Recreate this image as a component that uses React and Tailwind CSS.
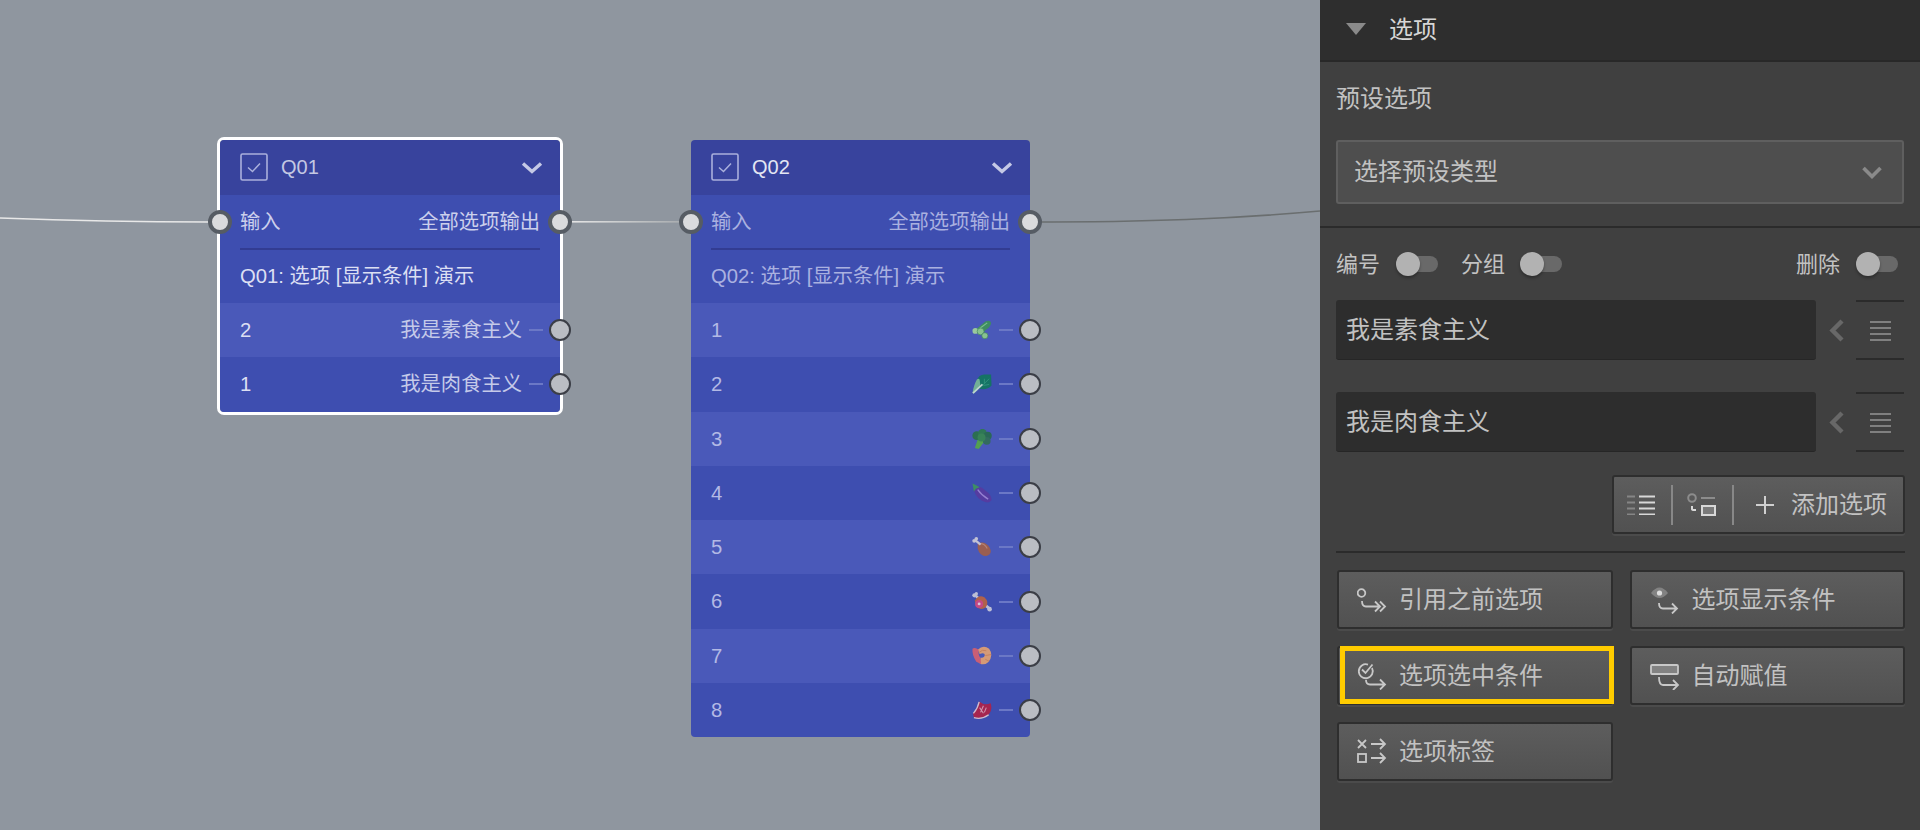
const Emoji = {
  cucumber: (
    <>
      <path d="M4 10 L14 1.5 Q19 -0.5 20 3 Q20 7 15 10 L10 15 Z" fill="#3c9653" />
      <path d="M8 9 L16 3" stroke="#86d088" strokeWidth="1.2" />
      <circle cx="3.5" cy="11.5" r="3" fill="#a9dd98" />
      <circle cx="9" cy="12" r="3.6" fill="#93d488" stroke="#3f8f4f" strokeWidth=".7" />
      <circle cx="13.5" cy="16.5" r="3.2" fill="#93d488" stroke="#3f8f4f" strokeWidth=".7" />
    </>
  ),
  bokchoy: (
    <>
      <path d="M5 7 Q7 0.5 13 0.5 L20 0.5 L20.5 12 Q15 18 6 15 Z" fill="#0e7a58" />
      <path d="M11 12 L18 5 M13 5 L13 10 M12 12 L18 11" stroke="#2fa075" strokeWidth=".9" fill="none" />
      <path d="M0.5 20 Q2 11 5 6 Q7 4 8 6 L9 13 Q6 17 2 20.5 Z" fill="#7cc093" />
      <path d="M1 20 L11 11" stroke="#d6ecd6" strokeWidth="1.8" />
    </>
  ),
  broccoli: (
    <>
      <path d="M3 20 L6 11 L13 13 L7 21 Z" fill="#56ad40" />
      <circle cx="5" cy="7" r="4.6" fill="#27733f" />
      <circle cx="11" cy="4.5" r="4.6" fill="#2b7d45" />
      <circle cx="16.5" cy="7" r="4.2" fill="#256b45" />
      <circle cx="15.5" cy="12.5" r="4" fill="#2f6f50" />
      <circle cx="10" cy="9" r="4.2" fill="#358a48" />
    </>
  ),
  eggplant: (
    <>
      <path d="M2 5 Q9 2 14 8 Q21 13 20.5 18 Q17 22.5 10 18.5 Q2 13 2 5 Z" fill="#5a3a9f" />
      <path d="M6 7 Q10 13 17 17" stroke="#a48ad8" strokeWidth="1.4" fill="none" />
      <path d="M0.5 0.5 L4 2 L8 4.5 L4 6 L2 9 Z" fill="#3e9a58" />
    </>
  ),
  drumstick: (
    <>
      <path d="M6 7 Q13 3 18.5 11 Q22 18.5 15 20 Q8 20 6 12 Z" fill="#a95f3f" />
      <path d="M9 7 Q13 7 16 12" stroke="#c98a66" strokeWidth="1.2" fill="none" />
      <path d="M9 8 L3 3" stroke="#d8d5da" strokeWidth="2.4" />
      <circle cx="2.3" cy="4" r="2" fill="#d8d5da" />
      <circle cx="4.5" cy="1.9" r="1.9" fill="#d8d5da" />
    </>
  ),
  meat: (
    <>
      <path d="M13 13 L19 18 M4 4 L7 7" stroke="#d2d2dc" strokeWidth="2.8" />
      <circle cx="2.5" cy="3.5" r="2.2" fill="#d2d2dc" />
      <circle cx="4.5" cy="1.8" r="1.8" fill="#d2d2dc" />
      <circle cx="18.5" cy="18" r="2.4" fill="#d2d2dc" />
      <path d="M3 9 Q7 2 13 5.5 Q19 11 14 16.5 Q8 20 4 15 Z" fill="#c4653a" />
      <circle cx="7.5" cy="12.5" r="4.2" fill="#dc4880" />
      <circle cx="7.5" cy="12.5" r="1.5" fill="#f2d8e0" />
    </>
  ),
  shrimp: (
    <>
      <path d="M6 4 Q12 -2 18 3 Q23 10 17 17 Q12 21 8 18 L9 12 Q13 13 13.5 9.5 Q13 6.5 8 8.5 Z" fill="#eea66c" />
      <path d="M7 7 Q11 3 15 5 M14 14 L18 16 M14 10 L20 9" stroke="#d98448" strokeWidth=".9" fill="none" />
      <path d="M0.5 3 Q0 10 4.5 16.5 L9.5 19 L9 13 Q6 9 7 4 Q3 1 0.5 3 Z" fill="#e0606a" />
    </>
  ),
  steak: (
    <>
      <path d="M1 14 Q6 9 7.5 1.5 Q13 6 19.5 3.5 Q22 10 17.5 15.5 Q10 21 2 18.5 Z" fill="#b81f40" />
      <path d="M1.5 14 Q6 9 7.5 2 M2 18.5 Q10 21 17.5 15.5" stroke="#e8ced4" strokeWidth="1.4" fill="none" />
      <path d="M8 8 L12 14 M12 6 L9 13 M15 8 L13 13" stroke="#eaa4b2" strokeWidth="1.1" />
    </>
  ),
};

function Port({ big, side }) {
  const bigPlace = side === "left" ? "left-[-12px]" : "right-[-12px]";
  const place = side === "left" ? "left-[-11px]" : "right-[-11px]";
  return big ? (
    <span className={`absolute ${bigPlace} top-1/2 -mt-[12px] w-[24px] h-[24px] rounded-full border-[4px] border-[#565c64] bg-[#dadbdd]`} />
  ) : (
    <span className={`absolute ${place} top-1/2 -mt-[11px] w-[22px] h-[22px] rounded-full border-2 border-[#3b3e46] bg-[#babdc3]`} />
  );
}

function CheckBox() {
  return (
    <svg width="28" height="28" viewBox="0 0 28 28" fill="none" stroke="#aab0dc" className="-mt-[2px]">
      <rect x="1" y="1" width="26" height="26" rx="1.5" strokeWidth="1.6" />
      <path d="M8 14.5 L12.5 18.5 L20 10.5" strokeWidth="1.5" />
    </svg>
  );
}

function Option({ n, i, last, label, emoji, numColor, labelColor }) {
  return (
    <div className={`relative h-[54.3px] flex items-center px-[20px] text-[20.3px] ${i % 2 === 0 ? "bg-[#4a59b9]" : "bg-[#3e4eb0]"} ${last ? "rounded-b-[4px]" : ""}`}>
      <span className={numColor}>{n}</span>
      {label && <span className={`ml-auto ${labelColor}`}>{label}</span>}
      {emoji && (
        <svg width="20" height="20" viewBox="0 0 21 21" className="ml-auto opacity-85">
          {Emoji[emoji]}
        </svg>
      )}
      <span className="w-[14px] h-[2px] bg-[#6b78c6] ml-[7px] -mr-[3px]" />
      <Port side="right" />
    </div>
  );
}

function Node({ id, selected, options, className }) {
  const titleColor = selected ? "text-[#c4c8e3]" : "text-[#e4e6f3]";
  const ioColor = selected ? "text-[#ccd0ec]" : "text-[#aab1e0]";
  const descColor = selected ? "text-[#dcdff3]" : "text-[#aab1e0]";
  const numColor = selected ? "text-[#dcdff3]" : "text-[#b3b9e5]";
  return (
    <div className={`absolute ${className} ${selected ? "border-[3.5px] border-white rounded-[7px]" : "rounded-[4px]"}`}>
      <div className="h-[55px] bg-[#38439d] rounded-t-[4px] flex items-center px-[20px]">
        <CheckBox />
        <span className={`ml-[13px] -mt-[2px] text-[20px] ${titleColor}`}>{id}</span>
        <svg width="22" height="14" viewBox="0 0 22 14" className="ml-auto -mr-[3px]" fill="none" stroke="#c5c9e6" strokeWidth="3.4">
          <path d="M2 2.5 L11 10.5 L20 2.5" />
        </svg>
      </div>
      <div className="bg-[#3e4eb0] px-[20px]">
        <div className={`relative h-[55px] pt-px flex items-center justify-between text-[20.3px] border-b-2 border-[#323c92] ${ioColor}`}>
          <span>输入</span>
          <span>全部选项输出</span>
          <span className="absolute left-[-20px] top-1/2"><Port big side="left" /></span>
          <span className="absolute right-[-20px] top-1/2"><Port big side="right" /></span>
        </div>
        <div className={`h-[53px] flex items-center text-[20.3px] ${descColor}`}>{id}: 选项 [显示条件] 演示</div>
      </div>
      {options.map((o, i) => (
        <Option key={i} i={i} last={i === options.length - 1} {...o} numColor={numColor} labelColor="text-[#c5cae9]" />
      ))}
    </div>
  );
}

function Toggle() {
  return (
    <span className="relative w-[42px] h-[24px] flex items-center">
      <span className="ml-[4px] w-[38px] h-[16px] rounded-full bg-[#696969]" />
      <span className="absolute left-0 top-0 w-[24px] h-[24px] rounded-full bg-[#b2b2b2] shadow-[0_2px_3px_rgba(0,0,0,0.3)]" />
    </span>
  );
}

function OptionInput({ text }) {
  return (
    <div className="flex h-[60px] items-center">
      <div className="w-[480px] h-full bg-[#2d2d2d] rounded-[3px] border-b border-[#262626] flex items-center pl-[10px] text-[24px] text-[#c2c2c2]">{text}</div>
      <div className="w-[40px] flex justify-center">
        <svg width="15" height="23" viewBox="0 0 15 23" fill="none" stroke="#686868" strokeWidth="4.4"><path d="M13 2 L3.5 11.5 L13 21" /></svg>
      </div>
      <div className="w-[48px] h-full border-y-2 border-[#2b2b2b] flex items-center justify-center">
        <svg width="21" height="21" viewBox="0 0 21 21" stroke="#808080" strokeWidth="2"><path d="M0 2 H21 M0 8 H21 M0 14 H21 M0 20 H21" /></svg>
      </div>
    </div>
  );
}

const btnBase = "relative h-[59px] rounded-[3px] border-2 border-[#2e2e2e] bg-gradient-to-b from-[#5d5d5d] to-[#515151] shadow-[0_2px_0_#4b4b4b] flex items-center text-[24px] text-[#c2c2c2]";

const btnIcons = {
  ref: (
    <>
      <circle cx="4.5" cy="7" r="3.8" />
      <path d="M5 15 Q5 20.5 9 20.5 H22 M18 15.5 L23 20.5 L18 25.5 M23 15.5 L28 20.5 L23 25.5" />
    </>
  ),
  eye: (
    <>
      <path d="M1 7 Q9.5 -4 18 7 Q9.5 17 1 7 Z" fill="#828282" stroke="none" />
      <circle cx="9.5" cy="7" r="2.6" fill="#dedede" stroke="none" />
      <path d="M9 17 Q9 22.5 13 22.5 H27 M22 17.5 L27 22.5 L22 27.5" />
    </>
  ),
  check: (
    <>
      <path d="M15 6 A7 7 0 1 1 11 2.6" />
      <path d="M5 7.5 L8.5 11 L15.5 2.5" />
      <path d="M9 18 Q9 22.5 13 22.5 H28 M23 17.5 L28 22.5 L23 27.5" />
    </>
  ),
  assign: (
    <>
      <rect x="1" y="3" width="27" height="9" rx="1" fill="#828282" />
      <path d="M9 15 Q9 23 13 23 H28 M23 18 L28 23 L23 28" />
    </>
  ),
  tag: (
    <>
      <path d="M1 2 L9 10 M9 2 L1 10" />
      <path d="M14 6 H28 M23 1 L28 6 L23 11" />
      <rect x="1" y="16" width="8" height="8" />
      <path d="M14 20 H28 M23 15 L28 20 L23 25" />
    </>
  ),
};

function ActionButton({ icon, text, highlight }) {
  return (
    <div className={`${btnBase} pl-[18px]`}>
      <svg width="30" height="28" viewBox="0 0 30 28" fill="none" stroke="#c8c8c8" strokeWidth="1.8">
        {btnIcons[icon]}
      </svg>
      <span className="ml-[12px]">{text}</span>
      {highlight && <span className="absolute left-[1px] -right-[3px] -top-[2px] -bottom-[1px] border-[5px] border-[#ffcc00]" />}
    </div>
  );
}

const q1 = [
  { n: 2, label: "我是素食主义" },
  { n: 1, label: "我是肉食主义" },
];
const q2 = ["cucumber", "bokchoy", "broccoli", "eggplant", "drumstick", "meat", "shrimp", "steak"].map((emoji, i) => ({ n: i + 1, emoji }));

export default function App() {
  return (
    <div className="flex w-[1920px] h-[830px] overflow-hidden [font-family:'Liberation_Sans','Noto_Sans_CJK_SC',sans-serif]">
      <div className="relative w-[1320px] h-full bg-[#8f969f] overflow-hidden">
        <svg className="absolute inset-0" width="1320" height="830" fill="none">
          <defs>
            <linearGradient id="mid" x1="0" x2="1" y1="0" y2="0">
              <stop offset="0" stopColor="#e8e8e8" />
              <stop offset="1" stopColor="#a4a8ab" />
            </linearGradient>
          </defs>
          <path d="M0 218 C 80 221, 130 222, 210 222" stroke="#e8e8e8" strokeWidth="1.6" />
          <rect x="565" y="221" width="125" height="1.6" fill="url(#mid)" />
          <path d="M1030 222 C 1150 222, 1230 219, 1320 211" stroke="#6a6e6f" strokeWidth="1.6" />
        </svg>
        <Node id="Q01" selected options={q1} className="left-[217px] top-[137px] w-[346px]" />
        <Node id="Q02" options={q2} className="left-[691px] top-[140px] w-[339px]" />
      </div>

      <div className="w-[600px] h-full bg-[#404040]">
        <div className="h-[62px] bg-[#2e2e2e] border-b-2 border-[#282828] flex items-center pl-[26px] text-[24px] text-[#d6d6d6]">
          <svg width="20" height="12" viewBox="0 0 20 12" className="-mt-[2px]"><path d="M0 0 H20 L10 12 Z" fill="#8a8a8a" /></svg>
          <span className="ml-[23px] -mt-[1px]">选项</span>
        </div>

        <div className="h-[166px] pl-[16px] pr-[16px] border-b-2 border-[#2b2b2b]">
          <div className="pt-[25px] h-[49px] text-[24px] leading-[24px] text-[#c2c2c2]">预设选项</div>
          <div className="mt-[29px] h-[64px] bg-[#4e4e4e] border-2 border-[#5f5f5f] rounded-[3px] flex items-center pl-[16px] pr-[20px] text-[24px] text-[#c2c2c2]">
            <span>选择预设类型</span>
            <svg width="20" height="13" viewBox="0 0 20 13" className="ml-auto" fill="none" stroke="#8a8a8a" strokeWidth="3.6"><path d="M1.5 2 L10 10.5 L18.5 2" /></svg>
          </div>
        </div>

        <div className="pl-[16px] pr-[15px]">
          <div className="mt-[24px] h-[24px] flex items-center text-[22px] text-[#c2c2c2]">
            <span>编号</span>
            <span className="ml-[16px]"><Toggle /></span>
            <span className="ml-[23px]">分组</span>
            <span className="ml-[15px]"><Toggle /></span>
            <span className="ml-auto">删除</span>
            <span className="ml-[16px] mr-[7px]"><Toggle /></span>
          </div>
          <div className="mt-[24px]"><OptionInput text="我是素食主义" /></div>
          <div className="mt-[32px]"><OptionInput text="我是肉食主义" /></div>

          <div className={`${btnBase} mt-[23px] ml-auto w-[293px] pl-[13px]`}>
            <svg width="28" height="20" viewBox="0 0 28 20" strokeWidth="2">
              <path d="M0 1.5 H8 M0 7.5 H8 M0 13.5 H8 M0 19.5 H8" stroke="#868686" />
              <path d="M12 1.5 H28 M12 7.5 H28 M12 13.5 H28 M12 19.5 H28" stroke="#d8d8d8" />
            </svg>
            <span className="ml-[16px] w-[2px] h-[40px] bg-[#888888]" />
            <svg width="30" height="24" viewBox="0 0 30 24" fill="none" strokeWidth="2" className="ml-[14px]">
              <circle cx="5" cy="5" r="3.8" stroke="#8c8c8c" />
              <path d="M14 5 H28" stroke="#8c8c8c" />
              <path d="M5 13 V16 Q5 17 7 17 H9" stroke="#d8d8d8" />
              <rect x="15" y="13" width="13" height="9" fill="#7a7a7a" stroke="#d8d8d8" />
            </svg>
            <span className="ml-[15px] w-[2px] h-[40px] bg-[#888888]" />
            <svg width="18" height="18" viewBox="0 0 18 18" stroke="#d0d0d0" strokeWidth="2" className="ml-[22px]"><path d="M0 9 H18 M9 0 V18" /></svg>
            <span className="ml-[17px]">添加选项</span>
          </div>

          <div className="mt-[17px] h-[2px] bg-[#2b2b2b]" />

          <div className="mt-[17px] ml-[1px] grid grid-cols-2 gap-x-[17px] gap-y-[17px]">
            <ActionButton icon="ref" text="引用之前选项" />
            <ActionButton icon="eye" text="选项显示条件" />
            <ActionButton icon="check" text="选项选中条件" highlight />
            <ActionButton icon="assign" text="自动赋值" />
            <ActionButton icon="tag" text="选项标签" />
          </div>
        </div>
      </div>
    </div>
  );
}
